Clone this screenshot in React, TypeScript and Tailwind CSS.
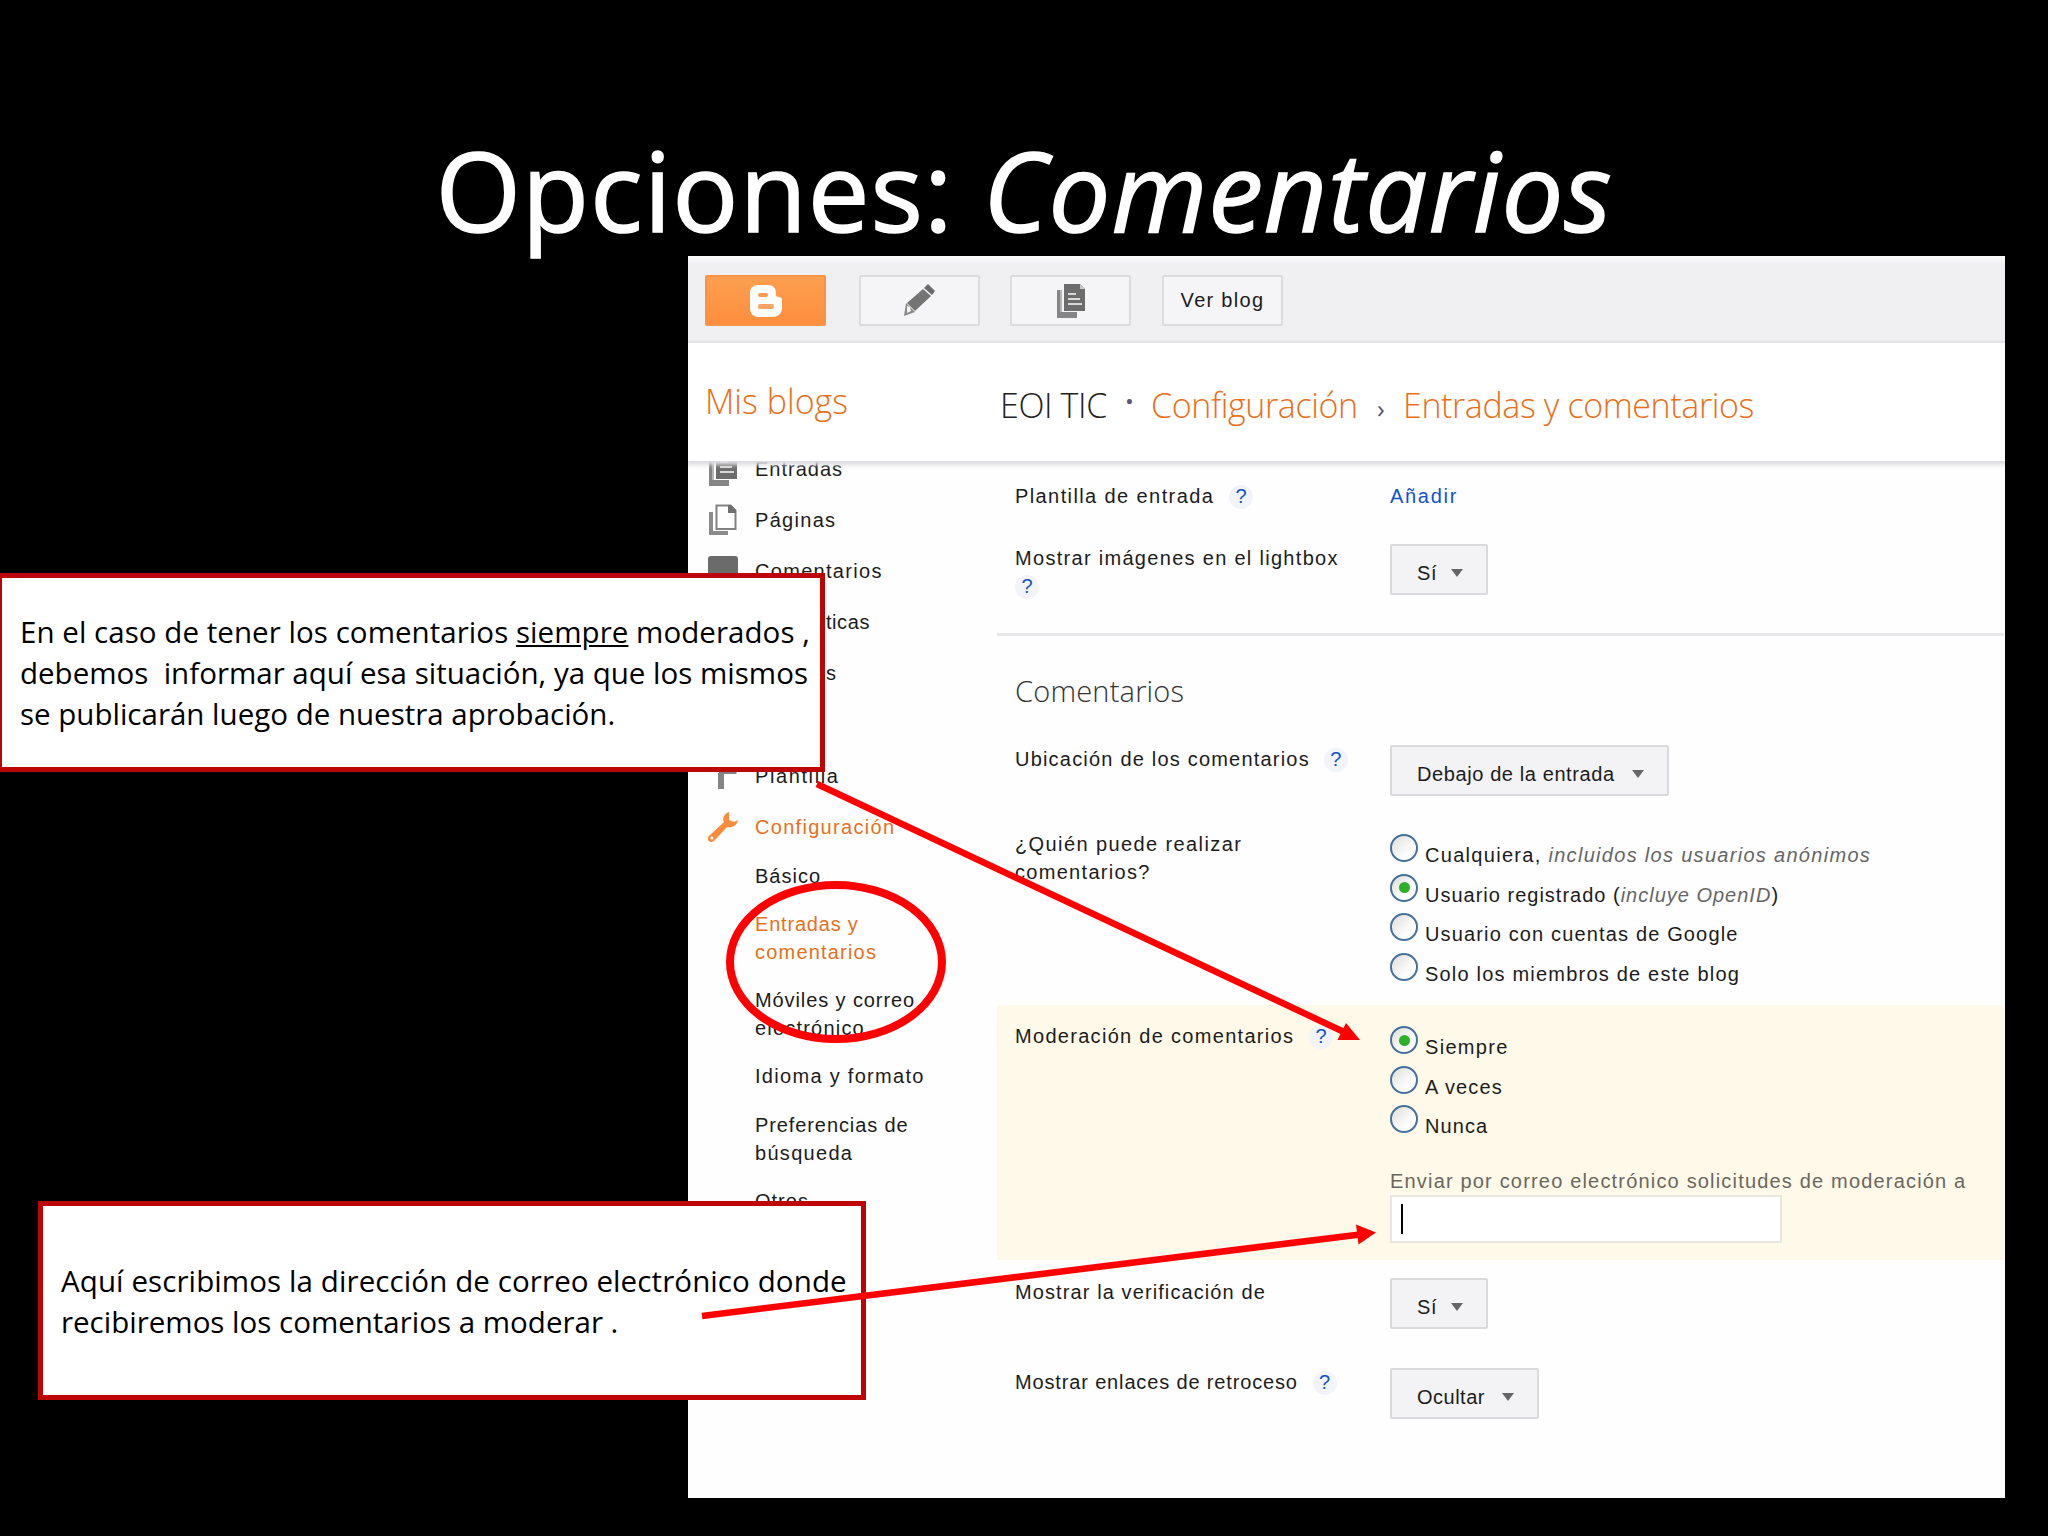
import type { ReactNode } from "react";

function BloggerIcon() {
  return (
    <svg width="34" height="34" viewBox="0 0 34 34">
      <path
        d="M9 1h10c5 0 8 3 8 8v2c0 1 1 2 3 2 2 0 3 1 3 3v8c0 5-4 9-9 9H9c-5 0-8-4-8-9V9c0-5 3-8 8-8z"
        fill="#fff"
      />
      <rect x="9" y="9" width="10" height="4" rx="2" fill="#fb9a50" />
      <rect x="9" y="20" width="16" height="5" rx="2" fill="#fba564" />
    </svg>
  );
}

function PencilIcon() {
  return (
    <svg width="34" height="34" viewBox="0 0 34 34" className="-ml-[2px]">
      <path d="M26 0l7 7-3 4-8-7z" fill="#6b6b6b" />
      <path d="M21 5l8 7-16 15-8-8z" fill="#747474" />
      <path d="M4 19l9 9-11 4z" fill="#8a8a8a" />
      <path d="M5 22l3 1 1 4-4 2z" fill="#f4f4f4" />
    </svg>
  );
}

function PostsIcon() {
  return (
    <svg width="28" height="36" viewBox="0 0 28 36">
      <path d="M0 7h5v22h15v6H0z" fill="#858585" />
      <path d="M3 7h2v22h-2z" fill="#b5b5b5" />
      <path d="M7 1h16l5 5v22H7z" fill="#6c6c6c" />
      <path d="M23 1l5 5h-5z" fill="#c9c9c9" />
      <path d="M11 11h8M11 16h12M11 21h14" stroke="#d8d8d8" strokeWidth="2" />
    </svg>
  );
}

function PagesIcon() {
  return (
    <svg width="28" height="32" viewBox="0 0 28 32">
      <path d="M0 8h4v19h15v4H0z" fill="#8b8b8b" />
      <path d="M7.500 1.500h14l5 5v18.500h-19z" fill="#fff" stroke="#828282" strokeWidth="2" />
      <path d="M19 1h3l5 5v3h-8z" fill="#6f6f6f" />
    </svg>
  );
}

function CommentIcon() {
  return (
    <svg width="30" height="32" viewBox="0 0 30 32" className="-ml-px">
      <path d="M3 1h24c2 0 3 1 3 3v19c0 2-1 3-3 3H15l-6 5v-5H3c-2 0-3-1-3-3V4c0-2 1-3 3-3z" fill="#6b6b6b" />
    </svg>
  );
}

function RollerIcon() {
  return (
    <svg width="28" height="34" viewBox="0 0 28 34">
      <path d="M2 2h22v9H2z" fill="#6b6b6b" />
      <path d="M26 6v7.500H11.500V18" fill="none" stroke="#808080" strokeWidth="3" />
      <path d="M9 14h6v16H9z" fill="#858585" />
    </svg>
  );
}

function WrenchIcon() {
  return (
    <svg width="32" height="32" viewBox="0 0 32 32" className="-ml-[2px]">
      <path
        d="M22 1c-5 2-7 6-5 10L2 25c-2 2-1 6 2 6 2 0 3-1 4-2l12-13c5 1 10-1 11-7l-4 2-5-2z"
        fill="#fb8b3c"
      />
      <circle cx="5" cy="27" r="1.500" fill="#fff" />
    </svg>
  );
}

function Help() {
  return (
    <span className="inline-block h-[24px] w-[24px] rounded-full bg-[#f3f4f9] text-center leading-[22px] tracking-normal text-[#1353c8]">
      ?
    </span>
  );
}

function Dropdown({ label, className }: { label: string; className: string }) {
  return (
    <div
      className={`flex h-[51px] items-center justify-between rounded-[2px] border-2 border-[#dad9dc] bg-[#f3f2f4] pt-[7px] pr-[23px] pl-[25px] ${className}`}
    >
      <span className="whitespace-nowrap">{label}</span>
      <svg width="12" height="8" viewBox="0 0 12 8" className="mb-px">
        <path d="M0 0h12L6 8z" fill="#666" />
      </svg>
    </div>
  );
}

function Radio({ checked, children }: { checked?: boolean; children: ReactNode }) {
  return (
    <div className="flex h-[39.600px] gap-[7px]">
      <span className="flex h-[28px] w-[28px] shrink-0 items-center justify-center rounded-full border-[2.500px] border-[#47719b] bg-linear-to-br from-[#dededa] to-white to-70%">
        {checked && <span className="h-[11px] w-[11px] rounded-full bg-[#2fae2c]" />}
      </span>
      <span className="mt-[7px] whitespace-nowrap">{children}</span>
    </div>
  );
}

function ToolbarButton({ children, className }: { children: ReactNode; className?: string }) {
  return (
    <div
      className={`flex h-[51px] w-[121px] items-center justify-center rounded-[2px] border-2 ${className ?? "border-[#dcdbde] bg-[#f5f4f6]"}`}
    >
      {children}
    </div>
  );
}

const menu: { label: string; icon?: ReactNode; className?: string }[] = [
  { label: "Entradas", icon: <PostsIcon />, className: "tracking-[1px]" },
  { label: "Páginas", icon: <PagesIcon /> },
  { label: "Comentarios", icon: <CommentIcon /> },
  { label: "Estadísticas", className: "tracking-[0.600px]" },
  { label: "Ingresos", className: "tracking-[0.600px]" },
  { label: "Diseño" },
  { label: "Plantilla", icon: <RollerIcon />, className: "tracking-[1.600px]" },
  { label: "Configuración", icon: <WrenchIcon />, className: "text-[#e8701a]" },
];

function Sidebar() {
  return (
    <nav className="w-[309px] shrink-0">
      <div className="-mt-[18px]">
        {menu.map((item) => (
          <div key={item.label} className="flex h-[51.200px] items-center">
            <div className="ml-[21px] flex w-[46px] items-center">{item.icon}</div>
            <span className={item.className}>{item.label}</span>
          </div>
        ))}
      </div>
      <div className="mt-[9px] flex flex-col gap-[20.300px] pl-[67px]">
        <p className="tracking-[1px]">Básico</p>
        <p className="text-[#e8701a]">
          <span className="tracking-[0.800px]">Entradas y</span>
          <br />
          <span className="tracking-[1.200px]">comentarios</span>
        </p>
        <p className="tracking-[0.900px]">
          Móviles y correo
          <br />
          <span className="tracking-[1.200px]">electrónico</span>
        </p>
        <p>Idioma y formato</p>
        <p>
          <span className="tracking-[0.900px]">Preferencias de</span>
          <br />
          búsqueda
        </p>
        <p className="tracking-[1px]">Otros</p>
      </div>
    </nav>
  );
}

function Row({ label, children, className }: { label: ReactNode; children?: ReactNode; className?: string }) {
  return (
    <div className={`flex pl-[18px] ${className ?? ""}`}>
      <div className="w-[375px] shrink-0 whitespace-nowrap">{label}</div>
      {children}
    </div>
  );
}

function Settings() {
  return (
    <div className="w-[1007px]">
      <Row
        className="h-[83px] pt-[21px]"
        label={
          <>
            <span className="tracking-[1.400px]">Plantilla de entrada</span>{" "}
            <span className="ml-[8px]"><Help /></span>
          </>
        }
      >
        <span className="tracking-[1.700px] text-[#1353c8]">Añadir</span>
      </Row>
      <Row
        className="h-[89px]"
        label={
          <>
            Mostrar imágenes en el lightbox
            <br />
            <Help />
          </>
        }
      >
        <Dropdown label="Sí" className="w-[98px] tracking-[0.600px]" />
      </Row>
      <div className="h-[3px] bg-[#e8e7ea]" />
      <h2 className="h-[109px] pt-[33px] pl-[18px] font-['Open_Sans'] text-[29px] leading-[44px] font-light tracking-[0.200px] text-[#333]">
        Comentarios
      </h2>
      <Row
        className="h-[85px]"
        label={
          <>
            <span className="tracking-[1.200px]">Ubicación de los comentarios</span>{" "}
            <span className="ml-[7px]"><Help /></span>
          </>
        }
      >
        <Dropdown label="Debajo de la entrada" className="w-[279px] tracking-[0.600px]" />
      </Row>
      <Row
        className="h-[175px]"
        label={
          <>
            <span className="tracking-[1.400px]">¿Quién puede realizar</span>
            <br />
            comentarios?
          </>
        }
      >
        <div className="pt-[4px]">
          <Radio>
            Cualquiera, <i className="text-[#666]">incluidos los usuarios anónimos</i>
          </Radio>
          <Radio checked>
            <span className="tracking-[1px]">
              Usuario registrado (<i className="text-[#666]">incluye OpenID</i>)
            </span>
          </Radio>
          <Radio>
            <span className="tracking-[1.150px]">Usuario con cuentas de Google</span>
          </Radio>
          <Radio>
            <span className="tracking-[1.200px]">Solo los miembros de este blog</span>
          </Radio>
        </div>
      </Row>
      <Row
        className="h-[255px] bg-[#fef9e8] pt-[17px]"
        label={
          <>
            Moderación de comentarios <span className="ml-[8px]"><Help /></span>
          </>
        }
      >
        <div className="pt-[4px]">
          <Radio checked>Siempre</Radio>
          <Radio>
            <span className="tracking-[1.100px]">A veces</span>
          </Radio>
          <Radio>
            <span className="tracking-[1.100px]">Nunca</span>
          </Radio>
          <p className="mt-[22px] tracking-[1.180px] whitespace-nowrap text-[#6b675f]">
            Enviar por correo electrónico solicitudes de moderación a
          </p>
          <div className="flex h-[48px] w-[392px] items-center border-2 border-[#e9e6e0] bg-white pl-[9px]">
            <span className="h-[30px] w-[2px] bg-black" />
          </div>
        </div>
      </Row>
      <Row
        className="h-[108px] pt-[18px]"
        label={<span className="tracking-[1.100px]">Mostrar la verificación de</span>}
      >
        <Dropdown label="Sí" className="w-[98px] tracking-[0.600px]" />
      </Row>
      <Row
        label={
          <>
            <span className="tracking-[0.850px]">Mostrar enlaces de retroceso</span>{" "}
            <span className="ml-[8px]"><Help /></span>
          </>
        }
      >
        <Dropdown label="Ocultar" className="w-[149px] tracking-[0.500px]" />
      </Row>
    </div>
  );
}

function BlogPanel() {
  return (
    <div className="ml-[688px] flex h-[1242px] w-[1317px] flex-col overflow-hidden bg-[#fefefe] font-['Liberation_Sans',sans-serif] text-[20px] leading-[28px] tracking-[1.300px] text-[#1c1c1c]">
      <div className="flex h-[87px] shrink-0 border-b-2 border-[#e6e5e8] bg-linear-to-b from-[#fbfbfb] to-[#f0eff2] to-10% pt-[19px] pl-[17px]">
        <ToolbarButton className="mr-[33px] border-[#f79347] bg-linear-to-b from-[#fd9f50] to-[#fd8e3d]">
          <BloggerIcon />
        </ToolbarButton>
        <ToolbarButton className="mr-[30px] border-[#dcdbde] bg-[#f5f4f6]">
          <PencilIcon />
        </ToolbarButton>
        <ToolbarButton className="mr-[31px] border-[#dcdbde] bg-[#f5f4f6]">
          <PostsIcon />
        </ToolbarButton>
        <ToolbarButton>
          <span className="-mt-[2px]">Ver blog</span>
        </ToolbarButton>
      </div>
      <div className="relative flex h-[118px] shrink-0 bg-white pt-[38px] pl-[17px] font-['Open_Sans'] text-[34px] leading-[48px] font-light tracking-[-0.400px] whitespace-nowrap shadow-[0_2px_4px_2px_#dddce0]">
        <span className="-mt-[4px] w-[295px] tracking-normal text-[#e8701a]">Mis blogs</span>
        <span className="flex w-[151px] text-[#222]">
          <span>EOI TIC</span>
          <span className="-mt-[4px] ml-[18px] font-semibold text-[#557]">·</span>
        </span>
        <span className="w-[226px] text-[#e8701a]">Configuración</span>
        <span className="w-[26px] text-[26px] leading-[54px] font-normal text-[#557]">›</span>
        <span className="text-[#e8701a]">Entradas y comentarios</span>
      </div>
      <div className="flex min-h-0 flex-1 overflow-hidden">
        <Sidebar />
        <Settings />
      </div>
    </div>
  );
}

function Callout({ children, className }: { children: ReactNode; className: string }) {
  return (
    <div
      className={`absolute flex h-[199px] w-[828px] flex-col justify-center border-[5px] border-[#bd0505] bg-white text-[29.500px] leading-[41px] whitespace-pre text-black ${className}`}
    >
      {children}
    </div>
  );
}

export default function App() {
  return (
    <main className="relative h-[1536px] w-[2048px] overflow-hidden bg-black font-['Open_Sans',sans-serif]">
      <h1 className="flex h-[256px] justify-center pt-[114px] text-[110px] leading-[150px] tracking-[0.900px] whitespace-pre text-white [-webkit-text-stroke:1.500px_white]">
        Opciones: <i>Comentarios</i>
      </h1>
      <BlogPanel />
      <Callout className="top-[573px] left-[-3px] pl-[18px]">
        <p className="tracking-[0.050px]">
          En el caso de tener los comentarios <u>siempre</u> moderados ,
        </p>
        <p>{"debemos  informar aquí esa situación, ya que los mismos"}</p>
        <p>se publicarán luego de nuestra aprobación.</p>
      </Callout>
      <Callout className="top-[1201px] left-[38px] pl-[18px] tracking-[0.100px]">
        <p>Aquí escribimos la dirección de correo electrónico donde</p>
        <p className="tracking-normal">recibiremos los comentarios a moderar .</p>
      </Callout>
      <svg className="absolute inset-0" width="2048" height="1536" viewBox="0 0 2048 1536">
        <ellipse cx="836" cy="962" rx="106" ry="77" fill="none" stroke="#fe0000" strokeWidth="8" />
        <path d="M817 784L1344 1032" stroke="#fe0000" strokeWidth="6.500" />
        <path d="M1360 1040l-14-17-8.500 17z" fill="#fe0000" />
        <path d="M702 1316L1360 1234.500" stroke="#fe0000" strokeWidth="6.500" />
        <path d="M1376 1232.500l-20-8 2.500 20z" fill="#fe0000" />
      </svg>
    </main>
  );
}
